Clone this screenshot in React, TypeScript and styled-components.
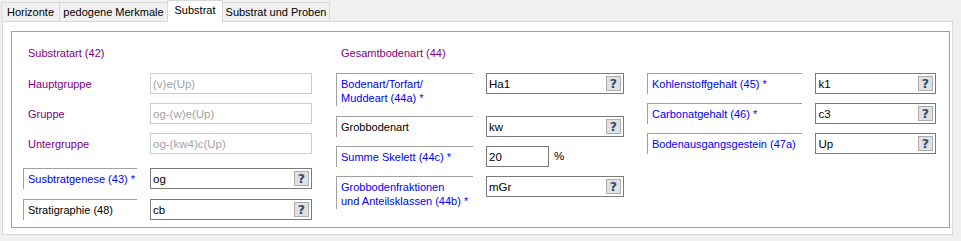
import React from 'react'
import styled, {createGlobalStyle} from 'styled-components'

const GlobalStyle = createGlobalStyle`
    body {
        margin: 0;
        background: #f0f0f0;
        font-family: 'Liberation Sans', Arial, sans-serif;
        font-size: 11px;
        color: #000000;
    }
`

const Window = styled.div`
    width: 961px;
    height: 241px;
    background: #f0f0f0;
    overflow: hidden;
`

const TabStrip = styled.div`
    display: flex;
    align-items: flex-end;
    height: 21px;
    padding-left: 1px;
`

const Tab = styled.div<{$w: number; $active?: boolean}>`
    position: relative;
    z-index: ${(p) => (p.$active ? 2 : 1)};
    box-sizing: border-box;
    width: ${(p) => p.$w}px;
    height: ${(p) => (p.$active ? 22 : 19)}px;
    margin-bottom: ${(p) => (p.$active ? -1 : 0)}px;
    margin-left: -1px;
    padding-top: ${(p) => (p.$active ? 3 : 3)}px;
    border: 1px solid #d9d9d9;
    border-bottom: none;
    background: ${(p) => (p.$active ? '#ffffff' : '#f0f0f0')};
    text-align: center;
    white-space: nowrap;
    font-size: 11px;
    &:first-child {
        margin-left: 0;
    }
`

const Panel = styled.div`
    box-sizing: border-box;
    margin-left: 2px;
    width: 951px;
    height: 214px;
    padding: 9px 0 0 8px;
    border: 1px solid #d9d9d9;
    background: #ffffff;
`

const GroupBox = styled.div`
    box-sizing: border-box;
    width: 939px;
    height: 197px;
    padding: 14px 0 0 11px;
    border: 1px solid #a0a0a0;
    display: grid;
    grid-template-columns: 313px 311px 289px;
    align-items: start;
`

const Column = styled.div`
    display: flex;
    flex-direction: column;
`

const SectionTitle = styled.div`
    height: 14px;
    line-height: 14px;
    padding-left: 5px;
    color: #800080;
    white-space: nowrap;
`

const Row = styled.div<{$gap: number}>`
    display: flex;
    align-items: flex-start;
    margin-top: ${(p) => p.$gap}px;
`

type Tone = 'purple' | 'blue' | 'black'

const toneColor: Record<Tone, string> = {
    purple: '#800080',
    blue: '#0000ff',
    black: '#000000',
}

const Label = styled.div<{$w: number; $tone: Tone; $framed?: boolean; $lines?: number}>`
    box-sizing: border-box;
    width: ${(p) => p.$w}px;
    min-height: ${(p) => (p.$lines === 2 ? 32 : 21)}px;
    margin-right: 13px;
    padding: ${(p) => (p.$framed ? '3px 0 1px 4px' : '4px 0 0 5px')};
    line-height: 14px;
    border-top: ${(p) => (p.$framed ? '1px solid #a0a0a0' : 'none')};
    border-left: ${(p) => (p.$framed ? '1px solid #a0a0a0' : 'none')};
    color: ${(p) => toneColor[p.$tone]};
    white-space: nowrap;
`

const Field = styled.div<{$w: number; $disabled?: boolean}>`
    box-sizing: border-box;
    width: ${(p) => p.$w}px;
    height: 21px;
    display: flex;
    align-items: center;
    justify-content: space-between;
    padding: 0 2px 0 2px;
    border: 1px solid ${(p) => (p.$disabled ? '#cccccc' : '#7a7a7a')};
    background: #ffffff;
    color: ${(p) => (p.$disabled ? '#a3a3a3' : '#000000')};
    font-size: 11.5px;
`

const HelpButton = styled.div`
    box-sizing: border-box;
    width: 15px;
    height: 15px;
    display: flex;
    align-items: center;
    justify-content: center;
    border: 1px solid #adadad;
    background: #e1e1e1;
    color: #34476e;
    font-family: 'DejaVu Sans', sans-serif;
    font-weight: bold;
    font-size: 12.5px;
`

const Unit = styled.div`
    height: 21px;
    line-height: 21px;
    margin-left: 5px;
    font-size: 11.5px;
`

type Entry = {
    label: string
    tone: Tone
    framed?: boolean
    lines?: number
    value: string
    width: number
    disabled?: boolean
    help?: boolean
    unit?: string
    gap: number
}

const columns: {title?: string; labelWidth: number; rows: Entry[]}[] = [
    {
        title: 'Substratart (42)',
        labelWidth: 114,
        rows: [
            {label: 'Hauptgruppe', tone: 'purple', value: '(v)e(Up)', width: 162, disabled: true, gap: 13},
            {label: 'Gruppe', tone: 'purple', value: 'og-(w)e(Up)', width: 162, disabled: true, gap: 9},
            {label: 'Untergruppe', tone: 'purple', value: 'og-(kw4)c(Up)', width: 162, disabled: true, gap: 9},
            {label: 'Susbtratgenese (43) *', tone: 'blue', framed: true, value: 'og', width: 162, help: true, gap: 14},
            {label: 'Stratigraphie (48)', tone: 'black', framed: true, value: 'cb', width: 162, help: true, gap: 10},
        ],
    },
    {
        title: 'Gesamtbodenart (44)',
        labelWidth: 137,
        rows: [
            {label: 'Bodenart/Torfart/\nMuddeart (44a) *', tone: 'blue', framed: true, lines: 2, value: 'Ha1', width: 138, help: true, gap: 13},
            {label: 'Grobbodenart', tone: 'black', framed: true, value: 'kw', width: 138, help: true, gap: 10},
            {label: 'Summe Skelett (44c) *', tone: 'blue', framed: true, value: '20', width: 63, unit: '%', gap: 9},
            {label: 'Grobbodenfraktionen\nund Anteilsklassen (44b) *', tone: 'blue', framed: true, lines: 2, value: 'mGr', width: 138, help: true, gap: 9},
        ],
    },
    {
        labelWidth: 156,
        rows: [
            {label: 'Kohlenstoffgehalt (45) *', tone: 'blue', framed: true, value: 'k1', width: 121, help: true, gap: 13},
            {label: 'Carbonatgehalt (46) *', tone: 'blue', framed: true, value: 'c3', width: 121, help: true, gap: 9},
            {label: 'Bodenausgangsgestein (47a)', tone: 'blue', framed: true, value: 'Up', width: 121, help: true, gap: 9},
        ],
    },
]

const tabs = [
    {name: 'Horizonte', w: 59},
    {name: 'pedogene Merkmale', w: 109},
    {name: 'Substrat', w: 56, active: true},
    {name: 'Substrat und Proben', w: 108},
]

const App: React.FC = () => {
    return (
        <Window>
            <GlobalStyle />
            <TabStrip>
                {tabs.map((t) => (
                    <Tab key={t.name} $w={t.w} $active={t.active}>
                        {t.name}
                    </Tab>
                ))}
            </TabStrip>
            <Panel>
                <GroupBox>
                    {columns.map((col, i) => (
                        <Column key={i}>
                            <SectionTitle>{col.title}</SectionTitle>
                            {col.rows.map((r) => (
                                <Row key={r.label} $gap={r.gap}>
                                    <Label
                                        $w={col.labelWidth}
                                        $tone={r.tone}
                                        $framed={r.framed}
                                        $lines={r.lines}
                                    >
                                        {r.label.split('\n').map((line) => (
                                            <div key={line}>{line}</div>
                                        ))}
                                    </Label>
                                    <Field $w={r.width} $disabled={r.disabled}>
                                        <span>{r.value}</span>
                                        {r.help && <HelpButton>?</HelpButton>}
                                    </Field>
                                    {r.unit && <Unit>{r.unit}</Unit>}
                                </Row>
                            ))}
                        </Column>
                    ))}
                </GroupBox>
            </Panel>
        </Window>
    )
}

export default App
